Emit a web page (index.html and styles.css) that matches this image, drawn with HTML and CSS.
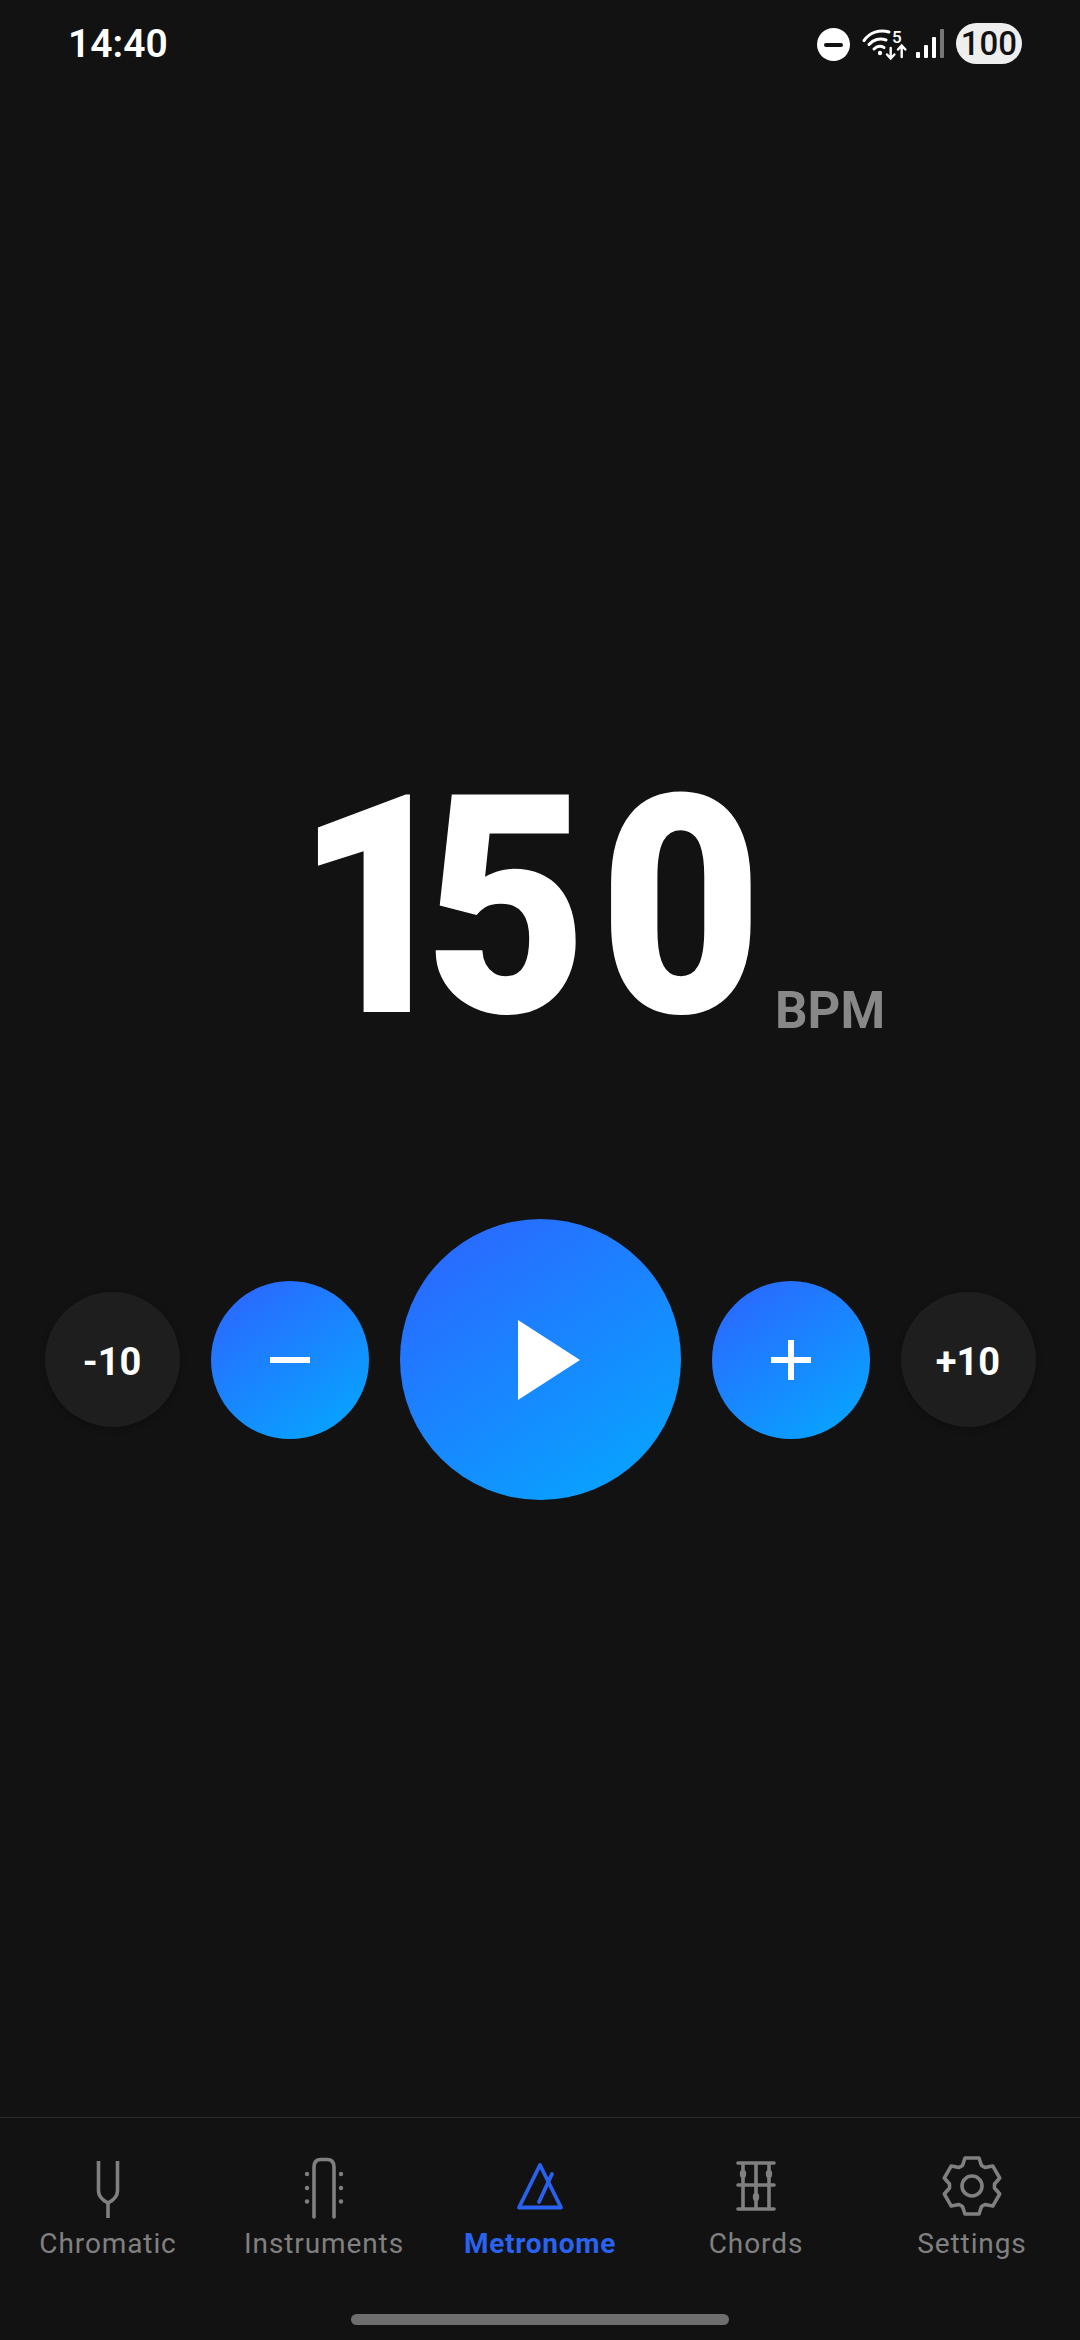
FILE: index.html
```html
<!DOCTYPE html>
<html lang="en">
<head>
    <meta charset="UTF-8">
    <meta name="viewport" content="width=device-width, initial-scale=1.0">
    <title>Metronome</title>
    <link rel="stylesheet" href="styles.css">
</head>
<body>
<div class="phone">

    <div class="status">
        <span class="time">14:40</span>
        <div class="status-icons">
            <span class="dnd"><span class="dnd-bar"></span></span>
            <svg class="wifi" width="56" height="40" viewBox="0 0 56 40" fill="none" stroke="#fff" stroke-linecap="round">
                <path d="M5 16.6A22 22 0 0 1 30 8" stroke-width="3"/>
                <path d="M10 20.5A15 15 0 0 1 27 16" stroke-width="3"/>
                <path d="M15 25A8.500 8.500 0 0 1 25 23.500" stroke-width="3"/>
                <circle cx="21" cy="29" r="2.200" fill="#fff" stroke="none"/>
                <text class="wifi-num" x="33" y="19">5</text>
                <path d="M31.700 24V34M28 30.500L31.700 34.500L35.400 30.500" stroke-width="2.400"/>
                <path d="M42.700 33V22M39 25.500L42.700 21.500L46.400 25.500" stroke-width="2.400"/>
            </svg>
            <div class="signal">
                <span class="sig-bar sig1"></span>
                <span class="sig-bar sig2"></span>
                <span class="sig-bar sig3"></span>
                <span class="sig-bar sig4"></span>
            </div>
            <span class="battery">100</span>
        </div>
    </div>

    <div class="main">
        <div class="tempo">
            <span class="tempo-num"><span class="tempo-one">1</span>50</span>
            <span class="tempo-unit">BPM</span>
        </div>

        <div class="controls">
            <button class="btn btn-dark">-10</button>
            <button class="btn btn-blue">
                <svg width="40" height="40" viewBox="0 0 40 40"><rect x="0" y="17" width="40" height="6" fill="#fff"/></svg>
            </button>
            <button class="btn btn-play">
                <svg width="62" height="80" viewBox="0 0 62 80"><polygon points="0,0 62,40 0,80" fill="#fff"/></svg>
            </button>
            <button class="btn btn-blue">
                <svg width="40" height="40" viewBox="0 0 40 40"><path d="M0 17H17V0H23V17H40V23H23V40H17V23H0Z" fill="#fff"/></svg>
            </button>
            <button class="btn btn-dark">+10</button>
        </div>
    </div>

    <div class="nav">
        <div class="nav-items">
            <div class="nav-item">
                <svg width="72" height="72" viewBox="0 0 72 72" fill="none" stroke="currentColor" stroke-width="3.600">
                    <path d="M26.500 8V38Q26.500 45 36 50Q45.500 45 45.500 38V8M36 50V65"/>
                </svg>
                <span class="nav-label">Chromatic</span>
            </div>
            <div class="nav-item">
                <svg width="72" height="72" viewBox="0 0 72 72" fill="none" stroke="currentColor" stroke-width="3.600" stroke-linecap="round">
                    <path d="M26 64V14Q26 6.500 33 6.500H39Q46 6.500 46 14V64"/>
                    <g fill="currentColor" stroke="none">
                        <circle cx="19" cy="21" r="2.200"/>
                        <circle cx="19" cy="35" r="2.200"/>
                        <circle cx="19" cy="48.500" r="2.200"/>
                        <circle cx="53" cy="21" r="2.200"/>
                        <circle cx="53" cy="35" r="2.200"/>
                        <circle cx="53" cy="48.500" r="2.200"/>
                    </g>
                </svg>
                <span class="nav-label">Instruments</span>
            </div>
            <div class="nav-item active">
                <svg width="72" height="72" viewBox="0 0 72 72" fill="none" stroke="currentColor" stroke-width="3.800" stroke-linejoin="round">
                    <path d="M36 12L15 54.500H57Z"/>
                    <path d="M35 49L48 21" stroke-linecap="round"/>
                </svg>
                <span class="nav-label">Metronome</span>
            </div>
            <div class="nav-item">
                <svg width="72" height="72" viewBox="0 0 72 72" fill="none" stroke="currentColor" stroke-width="3.600" stroke-linecap="round">
                    <path d="M23 10V56M36 10V56M49 10V56M18 10H54M18 32H54M18 56H54"/>
                    <g fill="currentColor" stroke="none">
                        <ellipse cx="23" cy="21" rx="3.200" ry="4.200"/>
                        <ellipse cx="49" cy="21" rx="3.200" ry="4.200"/>
                        <ellipse cx="36" cy="44" rx="3.200" ry="4.200"/>
                    </g>
                </svg>
                <span class="nav-label">Chords</span>
            </div>
            <div class="nav-item">
                <svg width="72" height="72" viewBox="0 0 72 72" fill="none" stroke="currentColor" stroke-width="3.600" stroke-linejoin="round">
                    <g transform="translate(36 33)">
                        <path d="M-9.500 -20.500L-7 -28H7L9.500 -20.500L13 -18.500L20.750 -20.060L27.750 -7.940L22.500 -2V2L27.750 7.940L20.750 20.060L13 18.500L9.500 20.500L7 28H-7L-9.500 20.500L-13 18.500L-20.750 20.060L-27.750 7.940L-22.500 2V-2L-27.750 -7.940L-20.750 -20.060L-13 -18.500Z"/>
                        <circle r="10"/>
                    </g>
                </svg>
                <span class="nav-label">Settings</span>
            </div>
        </div>
        <div class="home-bar"></div>
    </div>

</div>
</body>
</html>
```

FILE: styles.css
```css
* {
    box-sizing: border-box;
}
body {
    margin: 0;
    background-color: #121212;
    font-family: "Roboto", "Liberation Sans", sans-serif;
}
.phone {
    width: 1080px;
    height: 2340px;
    display: flex;
    flex-direction: column;
    overflow: hidden;
}

/* status bar */
.status {
    height: 88px;
    display: flex;
    justify-content: space-between;
    padding: 24px 58px 0 68px;
    color: #fff;
}
.time {
    font-size: 39px;
    font-weight: 600;
    line-height: 40px;
}
.status-icons {
    display: flex;
    align-items: flex-start;
    margin-top: -1px;
}
.dnd {
    width: 33px;
    height: 33px;
    margin-top: 5px;
    margin-right: 9px;
    border-radius: 50%;
    background-color: #fff;
    display: flex;
    align-items: center;
    justify-content: center;
}
.dnd-bar {
    width: 19px;
    height: 4px;
    border-radius: 2px;
    background-color: #121212;
}
.wifi {
    margin-top: 1px;
}
.wifi-num {
    font-family: "Roboto", sans-serif;
    font-size: 17px;
    font-weight: 500;
    fill: #fff;
    stroke: none;
}
.signal {
    display: flex;
    align-items: flex-end;
    gap: 4px;
    height: 29px;
    margin: 6px 0 0 1px;
}
.sig-bar {
    width: 4px;
    background-color: #fff;
    border-radius: 1px;
}
.sig1 { height: 6px; }
.sig2 { height: 13px; }
.sig3 { height: 21px; }
.sig4 { height: 29px; background-color: #777; }
.battery {
    width: 66px;
    height: 41px;
    margin-left: 12px;
    border-radius: 21px;
    background-color: #eee;
    color: #121212;
    font-size: 33px;
    font-weight: 500;
    line-height: 41px;
    text-align: center;
}

/* tempo and buttons */
.main {
    flex: 1;
    padding-top: 667px;
}
.tempo {
    display: flex;
    align-items: flex-end;
    padding-left: 295px;
    height: 306px;
}
.tempo-num {
    flex: none;
    width: 521px;
    margin-right: -52px;
    font-size: 306px;
    font-weight: 900;
    line-height: 306px;
    letter-spacing: 12.5px;
    white-space: nowrap;
    color: #fff;
    transform: scaleX(0.92);
    transform-origin: left center;
}
.tempo-one {
    letter-spacing: -36.5px;
}
.tempo-unit {
    font-size: 51px;
    font-weight: 700;
    line-height: 51px;
    color: #888;
    margin: 0 0 25px 11px;
}
.controls {
    display: flex;
    align-items: center;
    justify-content: center;
    gap: 31px;
    margin-top: 158px;
}
.btn {
    flex: none;
    padding: 0;
    border: none;
    border-radius: 50%;
    display: flex;
    align-items: center;
    justify-content: center;
    font-family: inherit;
    color: #fff;
}
.btn-dark {
    width: 135px;
    height: 135px;
    padding-top: 4px;
    background-color: #1e1e1e;
    box-shadow: 0 2px 6px rgba(0, 0, 0, 0.25);
    font-size: 38px;
    font-weight: 700;
}
.btn-blue {
    width: 158px;
    height: 158px;
    background: linear-gradient(145deg, #286dff 15%, #0a9fff 85%);
}
.btn-play {
    width: 281px;
    height: 281px;
    background: linear-gradient(145deg, #286dff 15%, #0a9fff 85%);
}
.btn-play svg {
    margin-left: 17px;
}

/* bottom nav */
.nav {
    height: 223px;
    border-top: 1px solid #2a2a2a;
    display: flex;
    flex-direction: column;
    justify-content: space-between;
    padding: 35px 0 15px;
}
.nav-items {
    display: flex;
}
.nav-item {
    flex: 1;
    display: flex;
    flex-direction: column;
    align-items: center;
    color: #808080;
}
.nav-item.active {
    color: #2a62f0;
}
.nav-label {
    font-size: 28px;
    line-height: 34px;
    letter-spacing: 0.9px;
    margin-top: 2px;
}
.active .nav-label {
    font-weight: 700;
    letter-spacing: 0.7px;
}
.home-bar {
    width: 378px;
    height: 11px;
    border-radius: 6px;
    background-color: #6e6e6e;
    align-self: center;
}
```
